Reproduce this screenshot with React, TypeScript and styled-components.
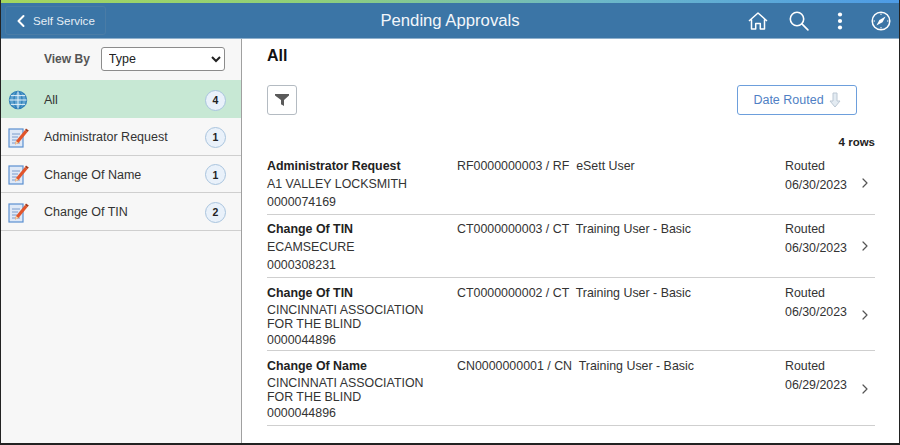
import * as React from "react";
import styled, {createGlobalStyle} from "styled-components";
import {ChevronLeft, ChevronRight} from "lucide-react";

const Global = createGlobalStyle`
  html, body { margin: 0; padding: 0; background: white; }
  body { font-family: "Liberation Sans", Arial, sans-serif; }
`;

const Frame = styled.div`
  display: grid;
  grid-template-rows: 3px 36px 1fr;
  width: 900px;
  height: 445px;
  box-sizing: border-box;
  border-left: 1px solid #222;
  border-right: 1px solid #222;
  border-bottom: 2px solid #222;
  overflow: hidden;
`;

const TopLine = styled.div`
  background: linear-gradient(90deg, #a4d65e 0%, #8fcf7a 35%, #6cb8c8 67%, #4d9be6 100%);
`;

const Banner = styled.header`
  display: grid;
  grid-template-columns: 1fr auto 1fr;
  align-items: center;
  background: #3b75a6;
  border-bottom: 1px solid #8fb0cc;
  color: white;
`;

const BackButton = styled.div`
  display: flex;
  align-items: center;
  justify-self: start;
  gap: 2px;
  box-sizing: border-box;
  height: 29px;
  width: 101px;
  margin-left: 4px;
  padding-left: 5px;
  border: 1px solid #4a7ca6;
  border-radius: 3px;
  font-size: 11.6px;
  color: #e6eef5;
`;

const Title = styled.h1`
  margin: 0;
  font-size: 16.7px;
  font-weight: 400;
  color: #f2f6fa;
`;

const BannerIcons = styled.div`
  display: flex;
  justify-self: end;
  align-items: center;
  gap: 20px;
  padding-right: 8px;
`;

const IconSlot = styled.div`
  display: flex;
  align-items: center;
  justify-content: center;
  width: 21px;
  height: 24px;
`;

const Body = styled.div`
  display: grid;
  grid-template-columns: 241px 1fr;
  min-height: 0;
`;

const Side = styled.aside`
  background: #f7f7f7;
  border-right: 1px solid #a0a0a0;
`;

const ViewBy = styled.div`
  display: flex;
  align-items: center;
  height: 41px;
  padding: 0 0 2px 43px;
  gap: 11px;
  box-sizing: border-box;
  font-size: 12px;
  font-weight: 700;
  color: #555;
`;

const Select = styled.select`
  width: 124px;
  height: 24px;
  box-sizing: border-box;
  padding-left: 3px;
  background: white;
  border: 1px solid #8c8c8c;
  border-radius: 3px;
  font-family: inherit;
  font-size: 12.5px;
  color: #222;
`;

const SideRow = styled.div<{$active?: boolean}>`
  display: grid;
  grid-template-columns: 36px 1fr auto;
  align-items: center;
  box-sizing: border-box;
  height: ${({$active}) => ($active ? "38px" : "37.5px")};
  padding: 2px 15px 0 7px;
  background: ${({$active}) => ($active ? "#c7e8d4" : "transparent")};
  border-bottom: ${({$active}) => ($active ? "0" : "1px solid #cfcfcf")};
  font-size: 12.5px;
  color: #333;
`;

const Count = styled.span`
  display: flex;
  align-items: center;
  justify-content: center;
  width: 21px;
  height: 21px;
  box-sizing: border-box;
  border: 1px solid #a9c4de;
  border-radius: 50%;
  background: #e9f1fa;
  font-size: 10.5px;
  font-weight: 700;
  color: #222;
`;

const Main = styled.main`
  padding: 8px 24px 0 25px;
  min-width: 0;
`;

const Heading = styled.h2`
  margin: 0;
  font-size: 16px;
  line-height: 18px;
  font-weight: 700;
  color: #111;
`;

const Toolbar = styled.div`
  display: flex;
  justify-content: space-between;
  align-items: center;
  margin-top: 20px;
  padding-right: 18px;
`;

const FilterButton = styled.div`
  display: flex;
  align-items: center;
  justify-content: center;
  width: 30px;
  height: 30px;
  box-sizing: border-box;
  border: 1px solid #b4bbc2;
  border-radius: 3px;
`;

const SortButton = styled.div`
  display: flex;
  align-items: center;
  justify-content: center;
  gap: 5px;
  width: 120px;
  height: 30px;
  box-sizing: border-box;
  border: 1px solid #6d9fdc;
  border-radius: 3px;
  font-size: 12.5px;
  color: #4f7fc4;
`;

const RowCount = styled.div`
  margin: 20px 0 2px;
  height: 15px;
  line-height: 15px;
  text-align: right;
  font-size: 11.5px;
  font-weight: 700;
  color: #222;
`;

const Row = styled.div<{$height: number; $wrapped: boolean}>`
  display: grid;
  grid-template-columns: 190px 328px 1fr 18px;
  align-items: start;
  box-sizing: border-box;
  height: ${({$height}) => $height}px;
  padding-top: ${({$wrapped}) => ($wrapped ? 8 : 7)}px;
  border-bottom: 1px solid #cfcfcf;
  font-size: 12.4px;
  line-height: 14px;
  color: #333;
`;

const Who = styled.div`
  width: 170px;
`;

const WhoTitle = styled.div<{$wrapped: boolean}>`
  font-weight: 700;
  color: #222;
  margin-bottom: ${({$wrapped}) => ($wrapped ? 3 : 4)}px;
`;

const WhoName = styled.div<{$wrapped: boolean}>`
  margin-bottom: ${({$wrapped}) => ($wrapped ? 2 : 4)}px;
`;

const Ref = styled.div`
  white-space: pre;
`;

const Routed = styled.div`
  line-height: 19px;
  margin-top: -2px;
`;

const Chevron = styled.div`
  align-self: center;
  margin-top: -7px;
  color: #555;
  line-height: 0;
`;

const Globe = () => (
  <svg width="20" height="20" viewBox="0 0 20 20" fill="none" stroke="#2f7fb8" strokeWidth="1.3">
    <circle cx="10" cy="10" r="8.6" fill="#5fa3d0" />
    <ellipse cx="10" cy="10" rx="4" ry="8.6" />
    <path d="M10 1.4v17.2M1.4 10h17.2M2.8 5.6h14.4M2.8 14.4h14.4" stroke="#e3f0f8" strokeWidth="1" />
  </svg>
);

const Note = () => (
  <svg width="21" height="23" viewBox="0 0 21 23">
    <rect x="1" y="3" width="14" height="18" fill="#dfe9f7" stroke="#5b8fd0" strokeWidth="1.2" />
    <path d="M4 8h8M4 11h6M4 14h5M4 17h8" stroke="#7d9ccb" strokeWidth="1" />
    <path d="M8 15l9-11 2.5 2-9 11-3.4 1.4z" fill="#e2552b" />
    <path d="M17 4l1-1.6 2.8 2.1-1.3 1.5z" fill="#a63a1a" />
    <path d="M7.1 18.4l.9-3.4 2.5 2z" fill="#f3d9a8" />
  </svg>
);

const Home = () => (
  <svg width="20" height="20" viewBox="0 0 20 20" fill="none" stroke="white" strokeWidth="1.5" strokeLinejoin="round">
    <path d="M1 10L10 2l9 8M3.5 8.5V18h4.2v-5.5h4.6V18h4.2V8.5" />
  </svg>
);

const Magnifier = () => (
  <svg width="20" height="20" viewBox="0 0 20 20" fill="none" stroke="white" strokeWidth="1.6" strokeLinecap="round">
    <circle cx="8" cy="8" r="6.7" />
    <path d="M12.9 12.9l6 6" />
  </svg>
);

const Dots = () => (
  <svg width="6" height="18" viewBox="0 0 6 18" fill="white">
    <circle cx="3" cy="2.5" r="2.1" />
    <circle cx="3" cy="9" r="2.1" />
    <circle cx="3" cy="15.5" r="2.1" />
  </svg>
);

const Compass = () => (
  <svg width="20" height="20" viewBox="0 0 20 20" fill="none" stroke="white">
    <circle cx="10" cy="10" r="8.8" strokeWidth="1.5" />
    <path d="M14.6 5.4L8.4 8.9 5.4 14.6l6.1-3.4z" fill="white" stroke="none" />
    <path d="M10 2.5v1.5M10 16v1.5M2.5 10H4M16 10h1.5" strokeWidth="1" />
  </svg>
);

const Funnel = () => (
  <svg width="14" height="14" viewBox="0 0 14 14" fill="#5a5a5a">
    <path d="M0 1h14v1.4L9 7v6L6.5 11.5H6V7L0 2.4z" />
  </svg>
);

const DownArrow = () => (
  <svg width="12" height="16" viewBox="0 0 12 16" fill="#e3ebf2" stroke="#bcc8d4" strokeWidth="1">
    <path d="M4 1h4v8h3l-5 6-5-6h3z" />
  </svg>
);

const groups = [
  {name: "Administrator Request", count: 1},
  {name: "Change Of Name", count: 1},
  {name: "Change Of TIN", count: 2},
];

const rows = [
  {kind: "Administrator Request", who: ["A1 VALLEY LOCKSMITH"], id: "0000074169", ref: "RF0000000003 / RF  eSett User", date: "06/30/2023", h: 63},
  {kind: "Change Of TIN", who: ["ECAMSECURE"], id: "0000308231", ref: "CT0000000003 / CT  Training User - Basic", date: "06/30/2023", h: 63},
  {kind: "Change Of TIN", who: ["CINCINNATI ASSOCIATION", "FOR THE BLIND"], id: "0000044896", ref: "CT0000000002 / CT  Training User - Basic", date: "06/30/2023", h: 73},
  {kind: "Change Of Name", who: ["CINCINNATI ASSOCIATION", "FOR THE BLIND"], id: "0000044896", ref: "CN0000000001 / CN  Training User - Basic", date: "06/29/2023", h: 75},
];

export default function App() {
  return (
    <>
      <Global />
      <Frame>
        <TopLine />
        <Banner>
          <BackButton>
            <ChevronLeft size={20} strokeWidth={2.4} color="white" />
            Self Service
          </BackButton>
          <Title>Pending Approvals</Title>
          <BannerIcons>
            <IconSlot><Home /></IconSlot>
            <IconSlot><Magnifier /></IconSlot>
            <IconSlot><Dots /></IconSlot>
            <IconSlot><Compass /></IconSlot>
          </BannerIcons>
        </Banner>
        <Body>
          <Side>
            <ViewBy>
              View By
              <Select defaultValue="Type">
                <option>Type</option>
              </Select>
            </ViewBy>
            <SideRow $active>
              <Globe />
              All
              <Count>4</Count>
            </SideRow>
            {groups.map((group) => (
              <SideRow key={group.name}>
                <Note />
                {group.name}
                <Count>{group.count}</Count>
              </SideRow>
            ))}
          </Side>
          <Main>
            <Heading>All</Heading>
            <Toolbar>
              <FilterButton>
                <Funnel />
              </FilterButton>
              <SortButton>
                Date Routed
                <DownArrow />
              </SortButton>
            </Toolbar>
            <RowCount>4 rows</RowCount>
            {rows.map((row) => {
              const wrapped = row.who.length > 1;
              return (
                <Row key={row.ref} $height={row.h} $wrapped={wrapped}>
                  <Who>
                    <WhoTitle $wrapped={wrapped}>{row.kind}</WhoTitle>
                    <WhoName $wrapped={wrapped}>
                      {row.who.map((line) => (
                        <div key={line}>{line}</div>
                      ))}
                    </WhoName>
                    <div>{row.id}</div>
                  </Who>
                  <Ref>{row.ref}</Ref>
                  <Routed>
                    Routed
                    <br />
                    {row.date}
                  </Routed>
                  <Chevron>
                    <ChevronRight size={16} strokeWidth={1.8} />
                  </Chevron>
                </Row>
              );
            })}
          </Main>
        </Body>
      </Frame>
    </>
  );
}
